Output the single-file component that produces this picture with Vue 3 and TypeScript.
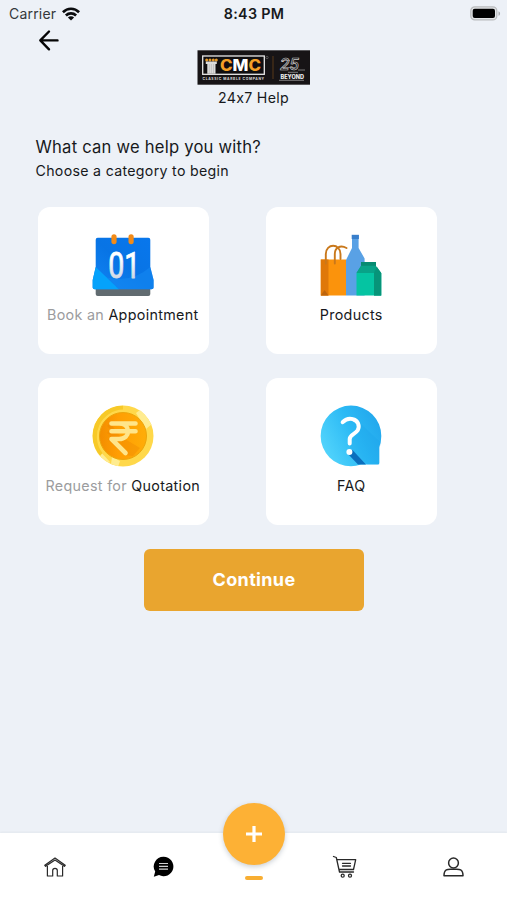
<script setup lang="ts">
import { ref } from 'vue'

type IconName = 'calendar' | 'products' | 'coin' | 'faq'

interface Category {
  icon: IconName
  prefix: string
  label: string
}

const categories: Category[] = [
  { icon: 'calendar', prefix: 'Book an', label: 'Appointment' },
  { icon: 'products', prefix: '', label: 'Products' },
  { icon: 'coin', prefix: 'Request for', label: 'Quotation' },
  { icon: 'faq', prefix: '', label: 'FAQ' },
]

const selected = ref<IconName | null>(null)
</script>

<template>
  <div class="screen">
    <header class="status">
      <div class="carrier">
        <span>Carrier</span>
        <svg class="wifi" width="18" height="14" viewBox="0 0 18 14">
          <g fill="none" stroke="#0b0c0e" stroke-width="2.7">
            <path d="M.9 5.2C5.5.6 12.500.6 17.100 5.200" />
            <path d="M3.900 8.500C6.800 5.700 11.200 5.700 14.100 8.500" />
          </g>
          <path d="M9 13.600L5.900 10.500C7.500 8.900 10.500 8.900 12.100 10.500Z" fill="#0b0c0e" />
        </svg>
      </div>
      <strong class="time">8:43 PM</strong>
      <svg class="battery" width="31" height="15" viewBox="0 0 31 15">
        <rect x=".8" y=".9" width="26" height="13" rx="4" fill="#e3e5e7" stroke="#b9bbbd" stroke-width="1.300" />
        <rect x="2.700" y="2.800" width="22.300" height="9.200" rx="2" fill="#000" />
        <path d="M28.500 5.200C30.600 6 30.600 9 28.500 9.800Z" fill="#a9abae" />
      </svg>
    </header>

    <button class="back" aria-label="Back">
      <svg width="22" height="22" viewBox="0 0 22 22" fill="none" stroke="#050505" stroke-width="2.400" stroke-linecap="round" stroke-linejoin="round">
        <path d="M11 2.500L2.300 11.400L11 20.300M2.500 11.400H19.500" />
      </svg>
    </button>

    <div class="brand">
      <svg width="113" height="35" viewBox="0 0 113 35">
        <rect x=".5" y=".3" width="112.500" height="34.400" fill="#171416" />
        <rect x="5.700" y="6" width="61.600" height="18.300" fill="#100e10" stroke="#e9e9e9" stroke-width="1.300" />
        <g fill="#e59a2a">
          <circle cx="9.700" cy="10" r="1.500" /><circle cx="13" cy="10" r="1.500" />
          <circle cx="16.300" cy="10" r="1.500" /><circle cx="19.300" cy="10" r="1.500" />
        </g>
        <path d="M8.800 11.600H19.800V14H18.500V23.700H10.300V14H8.800Z" fill="#dcdcdc" />
        <path d="M12.300 14V23.500M14.400 14V23.500M16.500 14V23.500" stroke="#aaa" stroke-width=".5" />
        <text x="23" y="20.800" class="cmc" textLength="41" lengthAdjust="spacingAndGlyphs"><tspan fill="#f4a127">C</tspan><tspan fill="#fff">M</tspan><tspan fill="#f4a127">C</tspan></text>
        <circle cx="70" cy="7.500" r="1.200" fill="none" stroke="#888" stroke-width=".5" />
        <text x="5.600" y="29.800" class="tagline" textLength="61.500" lengthAdjust="spacing">CLASSIC MARBLE COMPANY</text>
        <path d="M76 6V29" stroke="#69421a" stroke-width=".8" />
        <text x="83" y="19.600" class="years" textLength="19" lengthAdjust="spacingAndGlyphs">25</text>
        <path d="M84 10.500H93M85 17.500H98M101 20H108" stroke="#bbb" stroke-width=".6" />
        <text x="83.500" y="28.800" class="beyond" textLength="23.500" lengthAdjust="spacingAndGlyphs">BEYOND</text>
        <path d="M91 22.300H101M82 30.300H107" stroke="#aaa" stroke-width=".7" />
      </svg>
      <p>24x7 Help</p>
    </div>

    <main>
      <h1>What can we help you with?</h1>
      <p class="hint">Choose a category to begin</p>

      <div class="grid">
        <button v-for="c in categories" :key="c.icon" class="card" @click="selected = c.icon">
          <svg v-if="c.icon === 'calendar'" width="62" height="62" viewBox="0 0 62 62">
            <defs>
              <linearGradient id="digits" x1="0" y1="0" x2="0" y2="1">
                <stop offset=".35" stop-color="#fff" /><stop offset="1" stop-color="#b9c6d8" />
              </linearGradient>
              <linearGradient id="page" x1="0" y1="1" x2="1" y2="0">
                <stop offset="0" stop-color="#1184f3" /><stop offset=".5" stop-color="#0874e5" /><stop offset="1" stop-color="#0877ed" />
              </linearGradient>
            </defs>
            <path d="M3.700 50H58.300V60Q58.300 62 56.300 62H5.700Q3.700 62 3.700 60Z" fill="#616b70" />
            <path d="M5.700 3.700H56.300Q58.300 3.700 58.300 5.700V33L61.600 46V53.500Q61.600 55.300 59.600 55.300H2.700Q.7 55.300.7 53.500V46L3.700 33V5.700Q3.700 3.700 5.700 3.700Z" fill="url(#page)" />
            <path d="M3.700 33L27 55.300H2.700Q.7 55.300.7 53.500V46Z" fill="#05a2fb" />
            <path d="M58.300 33L61.600 46V53.500Q61.600 55.300 59.600 55.300H27L15 43.500Q40 49 58.300 33Z" fill="#158bf4" opacity=".5" />
            <rect x="19.400" y=".2" width="5.200" height="10" rx="2.600" fill="#f38b17" />
            <rect x="36.500" y=".2" width="5.200" height="10" rx="2.600" fill="#f38b17" />
            <text x="16.200" y="44" class="date" fill="url(#digits)" stroke="url(#digits)" textLength="32" lengthAdjust="spacingAndGlyphs">01</text>
          </svg>

          <svg v-else-if="c.icon === 'products'" width="62" height="62" viewBox="0 0 62 62">
            <path d="M32 1H38.600V14L44.600 24.500V61.500H26V26L32 14Z" fill="#59a1e5" />
            <path d="M31.700.8H38.900V5H31.700Z" fill="#397fcb" />
            <path d="M.8 25.500H26V61.500H.8Z" fill="#fb930c" />
            <path d="M.8 25.500H8.500V61.500H.8Z" fill="#df7809" />
            <path d="M.8 61.500L4.600 56L8.500 61.500Z" fill="#bd650d" />
            <path d="M5.800 29.500V20C5.800 9 20.500 9 20.500 20V25M14.800 29.500V20C14.800 14 20 10.500 26.500 14" fill="none" stroke="#c9781b" stroke-width="1.900" stroke-linecap="round" />
            <path d="M36.500 39H61.200V61.500H36.500Z" fill="#05c4a2" />
            <path d="M41 32H56L61.200 39V61.500H54V39H36.500Z" fill="#06a184" />
            <path d="M41 28H56V32H41Z" fill="#078b72" />
            <path d="M41 31.800H55L54 39H36.500Z" fill="#08a388" />
            <path d="M54 39L57 33L61.200 39V61.500H54Z" fill="#079479" />
          </svg>

          <svg v-else-if="c.icon === 'coin'" width="62" height="62" viewBox="0 0 62 62">
            <defs>
              <linearGradient id="face" x1="0" x2="1">
                <stop offset="0" stop-color="#f38d00" /><stop offset=".4" stop-color="#ff9e03" /><stop offset="1" stop-color="#ffad08" />
              </linearGradient>
              <clipPath id="rim"><circle cx="31" cy="31" r="30.500" /></clipPath>
            </defs>
            <circle cx="31" cy="31" r="30.500" fill="#ffd84a" />
            <g clip-path="url(#rim)">
              <path d="M44 8L54 24L60 19L49 4Z" fill="#ffec90" />
              <path d="M5 43L18 57L14 61L0 46ZM20 52L28 56L26 62L19 59Z" fill="#ffec90" />
              <path d="M31 .5A30.500 30.500 0 0 0 8 51L10.500 48A27 27 0 0 1 31 4.500Z" fill="#f7c928" />
            </g>
            <circle cx="31" cy="31" r="23.500" fill="url(#face)" stroke="#eda50b" stroke-width="1" />
            <path d="M18 18L15 21L18 24L15 28L19 31L16 35L32 50L41 51L48 43L28 31Z" fill="#e87e00" opacity=".3" />
            <path d="M19.500 18.500H43.500M19.500 26.200H43.500M19.500 18.500H27C39 18.500 39 34 27 34H19.500L33.500 48" fill="none" stroke="#ffe58a" stroke-width="4.600" stroke-linecap="round" stroke-linejoin="round" />
          </svg>

          <svg v-else width="62" height="62" viewBox="0 0 62 62">
            <defs>
              <linearGradient id="bubble" x1="0" y1=".75" x2="1" y2=".25">
                <stop offset="0" stop-color="#55d6fc" /><stop offset=".55" stop-color="#2cbaf5" /><stop offset="1" stop-color="#22a6ec" />
              </linearGradient>
            </defs>
            <path d="M31 .6A30.300 30.300 0 0 1 61.300 31Q61.300 37 59.300 42V58Q59.300 59.600 57.700 59.600H41Q36 61.300 31 61.300A30.300 30.300 0 0 1 31 .6Z" fill="url(#bubble)" />
            <path d="M40 18L61.300 38L59.300 43V59.600H47L30 43V37L38 28Z" fill="#139ce4" opacity=".2" />
            <path d="M32.500 45L46 59.600H38L28 49Z" fill="#0b6ebd" />
            <path d="M22.700 17.200C26 13.800 30 13.300 33 14.200C38 15.500 40 21 37.700 25.200C35 29.500 29.700 29.500 29.700 34V38.500" fill="none" stroke="#fff" stroke-width="4" stroke-linecap="round" />
            <circle cx="29.400" cy="47" r="3" fill="#fff" />
          </svg>

          <span class="label"><span v-if="c.prefix" class="muted">{{ c.prefix }}&nbsp;</span>{{ c.label }}</span>
        </button>
      </div>

      <button class="continue">Continue</button>
    </main>

    <nav class="tabs">
      <a class="tab home">
        <svg width="22" height="20" viewBox="0 0 22 20" fill="none" stroke="#292929" stroke-width="1.200" stroke-linejoin="round">
          <path d="M.8 8.300L11 1L21.200 8.300L20.400 9.300L11 3L1.600 9.300ZM3.400 9V19H8.700V13.500C8.700 10.700 13.300 10.700 13.300 13.500V19H18.600V9" />
        </svg>
      </a>
      <a class="tab chat">
        <svg width="21" height="22" viewBox="0 0 21 22">
          <path d="M10.700.8A9.700 9.700 0 1 1 6 19L.8 20.800L2.200 15.600A9.700 9.700 0 0 1 10.700.8Z" fill="#000" />
          <path d="M6 7.500H15M6 10.300H15M6 13.100H15" stroke="#cfcfcf" stroke-width="1.200" />
        </svg>
      </a>
      <span class="tab dash"></span>
      <a class="tab cart">
        <svg width="25" height="24" viewBox="0 0 25 24" fill="none" stroke="#292929" stroke-width="1.300" stroke-linejoin="round" stroke-linecap="round">
          <path d="M1.500 1.500L4.300 2.500L7.500 17H21.500M5 4.700H23.700L21.500 14.500H7M10.500 8.300H18.500M10.500 11H18.500" />
          <circle cx="10.700" cy="20.700" r="1.500" /><circle cx="18" cy="20.700" r="1.500" />
        </svg>
      </a>
      <a class="tab person">
        <svg width="21" height="20" viewBox="0 0 21 20" fill="none" stroke="#292929" stroke-width="1.500" stroke-linejoin="round">
          <circle cx="10.500" cy="6" r="4.900" />
          <path d="M1 18.700C1 10.800 6 12.300 10.500 12.300S20 10.800 20 18.700Z" />
        </svg>
      </a>
      <button class="fab" aria-label="Add">
        <svg width="18" height="18" viewBox="0 0 18 18" stroke="#fff" stroke-width="3.200"><path d="M9 1V17M1 9H17" /></svg>
      </button>
    </nav>
  </div>
</template>

<style>
body { background: #edf1f7; }
</style>

<style scoped>
.screen {
  width: 507px;
  height: 900px;
  display: flex;
  flex-direction: column;
  overflow: hidden;
  background: #edf1f7;
  font-family: Inter, "Liberation Sans", sans-serif;
  color: #17191c;
}
button { border: 0; padding: 0; background: none; font: inherit; color: inherit; }
svg { display: block; flex: none; }
p, h1 { margin: 0; }
.status {
  height: 27px;
  padding: 0 6px 0 9px;
  display: grid;
  grid-template-columns: 1fr auto 1fr;
  align-items: center;
}
.carrier { display: flex; align-items: center; gap: 6px; font-size: 14px; letter-spacing: .2px; color: #35383c; }
.time { margin-right: 2px; font-size: 14.3px; font-weight: 600; letter-spacing: .3px; }
.battery { justify-self: end; margin-top: -1px; }
.back { width: 22px; height: 22px; margin: 2px 0 0 38px; }
.brand { display: flex; flex-direction: column; align-items: center; margin-top: -1px; }
.brand p { margin-top: 4px; font-size: 14.200px; line-height: 18px; letter-spacing: .3px; }
.cmc { font: 800 15.500px Inter, sans-serif; }
.tagline { font: 700 3.400px Inter, sans-serif; fill: #ddd; }
.years { font: italic 500 16px Inter, sans-serif; fill: none; stroke: #c8c8c8; stroke-width: .7px; }
.beyond { font: 800 5.500px/1 Inter, sans-serif; fill: #eee; }
main { padding: 29px 0 0 35.500px; display: flex; flex-direction: column; }
h1 { font-size: 16.600px; line-height: 22px; font-weight: 400; letter-spacing: .22px; }
.hint { margin-top: 3px; font-size: 14.200px; line-height: 20px; letter-spacing: .3px; }
.grid {
  display: grid;
  grid-template-columns: 171.500px 171.500px;
  grid-auto-rows: 147px;
  gap: 24px 56.500px;
  margin: 26px 0 0 2px;
}
.card {
  display: flex;
  flex-direction: column;
  align-items: center;
  padding-top: 27px;
  border-radius: 12px;
  background: #fff;
}
.card:nth-child(odd) { padding-right: 1px; }
.label { margin-top: 8.500px; font-size: 14.300px; line-height: 20px; letter-spacing: .32px; white-space: nowrap; color: #17191c; }
.muted { color: #9b9c9e; }
.date { font: 400 37px Roboto, sans-serif; stroke-width: .8px; stroke-linejoin: round; }
.continue {
  width: 220px;
  height: 61.500px;
  margin: 24px 0 0 108.500px;
  border-radius: 6px;
  background: #e9a52f;
  color: #fff;
  font-size: 18px;
  font-weight: 650;
  letter-spacing: .35px;
}
.tabs {
  position: relative;
  height: 67px;
  margin-top: auto;
  display: grid;
  grid-template-columns: 109px 109px 72px 109px 108px;
  justify-items: center;
  align-items: center;
  background: #fff;
  box-shadow: 0 -1px 2px rgba(40, 50, 60, .05);
}
.dash { width: 18px; height: 4px; margin-top: 23px; border-radius: 2px; background: #f8ae32; }
.fab {
  position: absolute;
  left: 223px;
  top: -30.500px;
  width: 62px;
  height: 62px;
  display: grid;
  place-items: center;
  border-radius: 50%;
  background: #fdb135;
  box-shadow: 0 2px 5px rgba(50, 70, 90, .25);
}
</style>
